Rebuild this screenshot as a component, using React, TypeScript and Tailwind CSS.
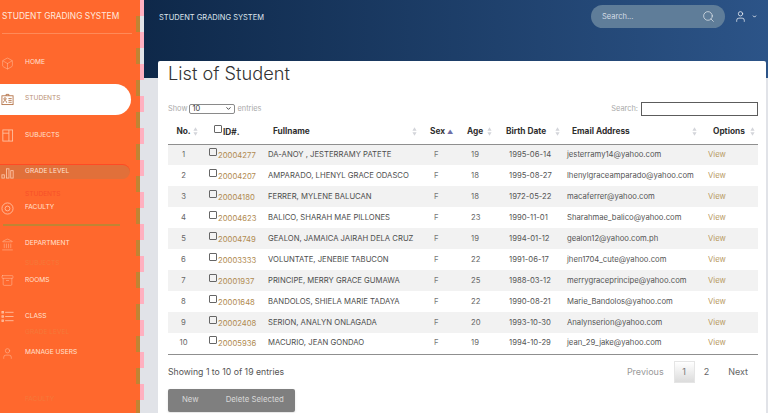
import React from "react";
import { Box, Landmark, Archive, User, Search, ChevronDown } from "lucide-react";

const IdIcon = (p: any) => (
  <svg viewBox="0 0 14 14" fill="none" stroke="currentColor" strokeWidth={0.8} {...p}>
    <rect x="1" y="3" width="12" height="9.5" />
    <path d="M5.5 3V1.5h3V3M2.5 10.5c0-1.6 1-2.2 1.8-2.2s1.8.6 1.8 2.2M8 6h3.5M8 8h3.5M8 10h3.5" />
    <circle cx="4.3" cy="6.3" r="1.2" />
  </svg>
);
const BookIcon = (p: any) => (
  <svg viewBox="0 0 14 14" fill="none" stroke="currentColor" strokeWidth={0.8} {...p}>
    <rect x="2" y="1" width="10.5" height="12" />
    <path d="M8.5 1v12M2 4.5h6.5" />
  </svg>
);
const BarsIcon = (p: any) => (
  <svg viewBox="0 0 14 14" fill="none" stroke="currentColor" strokeWidth={0.8} {...p}>
    <rect x="1" y="9.5" width="2.6" height="3.5" />
    <rect x="6" y="3" width="2.6" height="10" />
    <rect x="10.5" y="5" width="2.6" height="8" />
  </svg>
);
const TargetIcon = (p: any) => (
  <svg viewBox="0 0 14 14" fill="none" stroke="currentColor" strokeWidth={0.8} {...p}>
    <circle cx="7" cy="7" r="6" />
    <circle cx="7" cy="7" r="2.6" />
  </svg>
);
const ListIcon = (p: any) => (
  <svg viewBox="0 0 14 14" fill="none" stroke="currentColor" strokeWidth={0.8} {...p}>
    <path d="M4.5 2.5h9M4.5 7h9M4.5 11.5h9" />
    <rect x="1" y="1.7" width="1.6" height="1.6" />
    <rect x="1" y="6.2" width="1.6" height="1.6" />
    <rect x="1" y="10.7" width="1.6" height="1.6" />
  </svg>
);
const nav: [string, any][] = [
  ["HOME", Box], ["STUDENTS", IdIcon], ["SUBJECTS", BookIcon], ["GRADE LEVEL", BarsIcon], ["FACULTY", TargetIcon],
  ["DEPARTMENT", Landmark], ["ROOMS", Archive], ["CLASS", ListIcon], ["MANAGE USERS", User],
];
const rows = [
  ["1","20004277","DA-ANOY , JESTERRAMY PATETE","19","1995-06-14","jesterramy14@yahoo.com"],
  ["2","20004207","AMPARADO, LHENYL GRACE ODASCO","18","1995-08-27","lhenylgraceamparado@yahoo.com"],
  ["3","20004180","FERRER, MYLENE BALUCAN","18","1972-05-22","macaferrer@yahoo.com"],
  ["4","20004623","BALICO, SHARAH MAE PILLONES","23","1990-11-01","Sharahmae_balico@yahoo.com"],
  ["5","20004749","GEALON, JAMAICA JAIRAH DELA CRUZ","19","1994-01-12","gealon12@yahoo.com.ph"],
  ["6","20003333","VOLUNTATE, JENEBIE TABUCON","22","1991-06-17","jhen1704_cute@yahoo.com"],
  ["7","20001937","PRINCIPE, MERRY GRACE GUMAWA","25","1988-03-12","merrygraceprincipe@yahoo.com"],
  ["8","20001648","BANDOLOS, SHIELA MARIE TADAYA","22","1990-08-21","Marie_Bandolos@yahoo.com"],
  ["9","20002408","SERION, ANALYN ONLAGADA","20","1993-10-30","Analynserion@yahoo.com"],
  ["10","20005936","MACURIO, JEAN GONDAO","19","1994-10-29","jean_29_jake@yahoo.com"],
];
const Sort = () => (
  <svg viewBox="0 0 6 10" className="absolute right-[3px] top-[8px] h-[9px] w-[5px] fill-[#d3d5da]">
    <path d="M3 0l2.5 4h-5zM3 10L.5 6h5z" />
  </svg>
);

export default function App() {
  return (
    <div className="flex h-[413px] w-[768px] overflow-hidden bg-[#e1e3e8] font-['Inter',sans-serif]">
      <aside className="relative flex w-[140px] shrink-0 flex-col bg-[#ff682d] text-[#ffe6d8]">
        <div className="mx-[2px] flex h-[34px] w-[130px] items-center whitespace-nowrap border-b border-[#ff8a58] text-[8.4px] text-[#ffe9de]">STUDENT GRADING SYSTEM</div>
        <nav className="mt-[11px] flex flex-col">
          {nav.map(([label, Icon]) => {
            const active = label === "STUDENTS";
            const grade = label === "GRADE LEVEL";
            return (
              <div key={label} className={`flex h-[36.25px] items-center text-[6.6px] ${active ? "text-[#b98f74]" : "text-[#ffe2d3]"}`}>
                <div className={`flex items-center ${active ? "h-[31px] w-[131px] rounded-r-full bg-white" : grade ? "h-[15px] w-[130px] rounded-r-[10px] border-t border-[#ff4a24] bg-[#e1703a]" : "w-[130px]"}`}>
                  <span className="flex w-[25px] pl-[1px]"><Icon width={13} height={13} strokeWidth={0.9} className={active ? "text-[#b06a3c]" : "text-[#ffc7aa]"} /></span>
                  <span className="whitespace-nowrap">{label}</span>
                </div>
              </div>
            );
          })}
        </nav>
        {/* faint ghost labels and rule lying over the sidebar */}
        <span className="absolute left-[25px] top-[190px] text-[6.6px] text-[#f8502a]">STUDENTS</span>
        <span className="absolute left-[25px] top-[259px] text-[6.6px] text-[#f5793a]">SUBJECTS</span>
        <span className="absolute left-[25px] top-[328px] text-[6.6px] text-[#f5793a]">GRADE LEVEL</span>
        <span className="absolute left-[25px] top-[395px] text-[6.6px] text-[#f5793a]">FACULTY</span>
        <div className="absolute left-[3px] top-[224px] h-[2px] w-[117px] bg-[#c08433]" />
        <div className="absolute bottom-0 right-[-4px] top-0 w-[4px] bg-[repeating-linear-gradient(180deg,#ffb0c0_0_16px,#e1e3e8_16px_32px)]" />
        <div className="absolute bottom-0 right-0 top-0 w-[4px] bg-[repeating-linear-gradient(180deg,#ff682d_0_16px,#c08433_16px_32px)]" />
      </aside>
      <main className="flex min-w-0 flex-1 flex-col">
        <header className="flex h-[78px] shrink-0 items-start justify-between bg-[linear-gradient(90deg,#0e2849,#2c5488)] pl-[19px] pr-[11px] pt-[5px] text-white">
          <div className="mt-[7px] whitespace-nowrap text-[7.5px] text-[#dfe6ee]">STUDENT GRADING SYSTEM</div>
          <div className="flex items-center">
            <div className="flex h-[23px] w-[134px] items-center justify-between rounded-full bg-[#5f7d99] pl-[11px] pr-[10px] text-[7.5px] text-[#d5dee6]">
              <span>Search...</span>
              <Search size={13} strokeWidth={1.1} className="text-white" />
            </div>
            <User size={13} strokeWidth={1.3} className="ml-[9px] text-white" />
            <ChevronDown size={5} strokeWidth={4} className="ml-[5px] text-white" />
          </div>
        </header>
        <section className="ml-[18px] mr-[2px] -mt-[17px] flex flex-1 flex-col rounded-t-[2px] bg-white pl-[10px] pr-[8px] text-[7.4px] text-[#4a4a4a]">
          <h1 className="h-[24px] text-[18.2px] font-light leading-[24px] text-[#333]">List of Student</h1>
          <div className="mt-[16px] flex h-[16px] items-center justify-between text-[7.4px] text-[#a9a9a9]">
            <div className="flex items-center">Show
              <span className="mx-[2px] flex h-[10px] w-[46px] items-center justify-between rounded-[2px] border border-[#8a8a8a] px-[2px] text-[#333]">10<ChevronDown size={7} strokeWidth={3} /></span>
              entries</div>
            <div className="flex items-center">Search:<span className="ml-[3px] h-[14px] w-[117px] border border-[#5c5c5c]" /></div>
          </div>
          <table className="mt-[2px] w-[590px] table-fixed border-collapse">
            <colgroup>
              <col className="w-[33px]" /><col className="w-[59px]" /><col className="w-[160px]" /><col className="w-[40px]" /><col className="w-[35px]" /><col className="w-[68px]" /><col className="w-[137px]" /><col className="w-[58px]" />
            </colgroup>
            <thead>
              <tr className="h-[25px] border-b border-[#8f8f8f] text-[8.3px] font-bold text-[#2f2f2f]">
                <th className="relative pr-[2px] text-center">No.<Sort /></th>
                <th className="relative text-left"><span className="ml-[13px] mr-[1px] inline-block h-[8px] w-[8px] rounded-[1px] border border-[#666] align-[2px]" />ID#.</th>
                <th className="relative pl-[13px] text-left">Fullname<Sort /></th>
                <th className="relative pl-[10px] text-left">Sex<span className="absolute left-[27px] top-[8px] text-[6px] text-[#6f6fa8]">▲</span></th>
                <th className="relative pl-[7px] text-left">Age<Sort /></th>
                <th className="relative pl-[11px] text-left">Birth Date<Sort /></th>
                <th className="relative pl-[9px] text-left">Email Address<Sort /></th>
                <th className="relative pl-[13px] text-left">Options<Sort /></th>
              </tr>
            </thead>
            <tbody className="text-[7.7px]">
              {rows.map((r, i) => (
                <tr key={r[0]} className={`h-[21px] ${i % 2 === 0 ? "bg-[#f2f2f2]" : "bg-white"} ${i === 9 ? "border-b border-[#8f8f8f]" : ""}`}>
                  <td className="pr-[2px] text-center text-[#666]">{r[0]}</td>
                  <td className="whitespace-nowrap"><span className="ml-[8px] mr-[1px] inline-block h-[8px] w-[8px] rounded-[1px] border border-[#666] align-[2px]" /><span className="text-[#b08a50]">{r[1]}</span></td>
                  <td className="whitespace-nowrap pl-[8px] text-[#4d4d4d]">{r[2]}</td>
                  <td className="pl-[14px] text-[#777]">F</td>
                  <td className="pl-[11px] text-[#666]">{r[3]}</td>
                  <td className="pl-[14px] text-[#555]">{r[4]}</td>
                  <td className="whitespace-nowrap pl-[4px] text-[#555]">{r[5]}</td>
                  <td className="pl-[8px] text-[#b89a5f]">View</td>
                </tr>
              ))}
            </tbody>
          </table>
          <div className="flex items-start justify-between">
            <div className="mt-[11px] text-[8.7px] text-[#555]">Showing 1 to 10 of 19 entries</div>
            <div className="mt-[6px] flex h-[23px] items-center pr-[10px] text-[9px] text-[#666]">
              <span className="text-[#999]">Previous</span>
              <span className="ml-[10px] flex h-[22px] w-[21px] items-center justify-center border border-[#e5e5e5] bg-[linear-gradient(180deg,#fff,#dcdcdc)] text-[#777]">1</span>
              <span className="ml-[9px]">2</span>
              <span className="ml-[19px]">Next</span>
            </div>
          </div>
          <div className="mt-[5px] flex h-[23px] w-[127px] items-center rounded-[2px] bg-[#7f7f7f] text-[7.8px] text-[#d8d8d8] shadow-sm">
            <span className="ml-[14px]">New</span>
            <span className="ml-[27px]">Delete Selected</span>
          </div>
        </section>
      </main>
    </div>
  );
}
